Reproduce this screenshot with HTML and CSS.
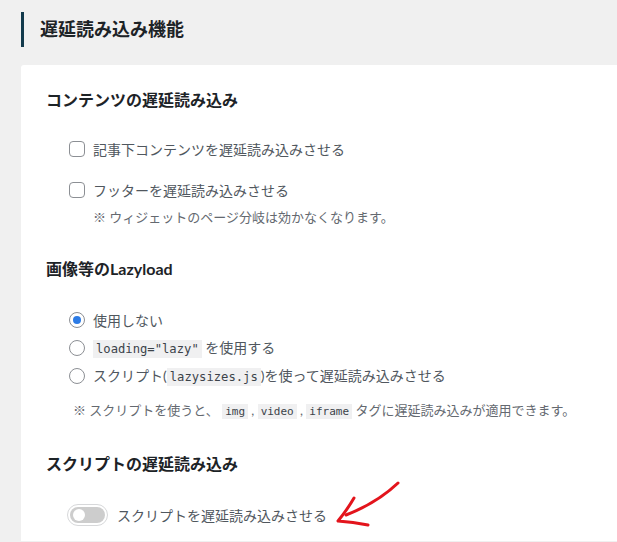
FILE: index.html
```html
<!DOCTYPE html>
<html lang="ja">
<head>
<meta charset="utf-8">
<title>遅延読み込み機能</title>
<link rel="stylesheet" href="styles.css">
</head>
<body>
<h1 class="page-title">遅延読み込み機能</h1>
<div class="card">
  <section class="sec">
    <h2 class="sec-title">コンテンツの遅延読み込み</h2>
    <div class="opts opts-check">
      <label class="row"><input type="checkbox" class="cb"><span>記事下コンテンツを遅延読み込みさせる</span></label>
      <label class="row"><input type="checkbox" class="cb"><span>フッターを遅延読み込みさせる</span></label>
      <p class="note note-in">※ ウィジェットのページ分岐は効かなくなります。</p>
    </div>
  </section>
  <section class="sec">
    <h2 class="sec-title">画像等のLazyload</h2>
    <div class="opts opts-radio">
      <label class="row"><input type="radio" name="lazy" class="rd" checked><span>使用しない</span></label>
      <label class="row"><input type="radio" name="lazy" class="rd"><span><code>loading="lazy"</code> を使用する</span></label>
      <label class="row"><input type="radio" name="lazy" class="rd"><span>スクリプト(<code>lazysizes.js</code>)を使って遅延読み込みさせる</span></label>
    </div>
    <p class="note note-out">※ スクリプトを使うと、 <code>img</code> , <code>video</code> , <code>iframe</code> タグに遅延読み込みが適用できます。</p>
  </section>
  <section class="sec">
    <h2 class="sec-title">スクリプトの遅延読み込み</h2>
    <div class="opts opts-toggle">
      <label class="row"><span class="toggle"><span class="track"><span class="knob"></span></span></span><span>スクリプトを遅延読み込みさせる</span></label>
    </div>
  </section>
</div>
<svg class="arrow" width="617" height="542" viewBox="0 0 617 542" aria-hidden="true">
  <path d="M398 483 Q377 503 346 515" />
  <path d="M354 498 Q347 510 338 521 Q353 522 368 525" />
</svg>
</body>
</html>
```
FILE: styles.css
```css
html, body {
  margin: 0;
  padding: 0;
}
body {
  background: #f0f0f0;
  font-family: Lato, "Noto Sans CJK JP", sans-serif;
  color: #1d2327;
  overflow: hidden;
  height: 542px;
  position: relative;
}
.page-title {
  margin: 12px 0 0 21px;
  height: 35px;
  line-height: 35px;
  border-left: 3px solid #123a4c;
  padding-left: 16px;
  font-size: 18px;
  font-weight: 700;
  color: #1d2327;
}
.card {
  margin: 18px 0 0 21px;
  background: #fff;
  border-top-left-radius: 3px;
  padding: 22px 0 12px 25px;
}
.sec-title {
  margin: 0;
  font-size: 16px;
  line-height: 26px;
  font-weight: 700;
  color: #1d2327;
}
.sec + .sec {
  margin-top: 29px;
}
.sec:nth-child(3) {
  margin-top: 30px;
}
.opts {
  padding-left: 23px;
  display: flex;
  flex-direction: column;
}
.opts-check {
  margin-top: 22px;
  gap: 13px;
}
.opts-check .note-in {
  margin-top: -10px;
  padding-left: 24px;
}
.opts-radio {
  margin-top: 24px;
}
.opts-toggle {
  margin-top: 24px;
  padding-left: 21px;
}
.row {
  display: flex;
  align-items: center;
  height: 28px;
  font-size: 14px;
  color: #50575e;
}
.cb, .rd {
  appearance: none;
  -webkit-appearance: none;
  margin: 0 8px 0 0;
  width: 16px;
  height: 16px;
  border: 1px solid #8c8f94;
  background: #fff;
  flex: none;
  position: relative;
}
.cb {
  border-radius: 4px;
}
.rd {
  border-radius: 50%;
}
.rd:checked::after {
  content: "";
  position: absolute;
  left: 3px;
  top: 3px;
  width: 8px;
  height: 8px;
  border-radius: 50%;
  background: #2c7be5;
}
code {
  font-family: "DejaVu Sans Mono", "Liberation Mono", monospace;
  font-size: 12.2px;
  background: #f0f0f1;
  color: #3c434a;
  padding: 2px 3px;
  line-height: 19px;
}
.note {
  margin: 0;
  font-size: 13px;
  line-height: 20px;
  color: #646970;
}
.note code {
  font-size: 11px;
  padding: 1px 3px;
}
.note-out {
  margin-top: 10px;
  padding-left: 27px;
}
.toggle {
  flex: none;
  box-sizing: border-box;
  width: 41px;
  height: 22px;
  border: 1px solid #d7d8da;
  border-radius: 11px;
  padding: 2px;
  margin-right: 9px;
  background: #fff;
}
.track {
  display: flex;
  align-items: center;
  height: 100%;
  border-radius: 9px;
  background: #cdcdcd;
  padding-left: 3px;
}
.knob {
  width: 12px;
  height: 12px;
  border-radius: 50%;
  background: #fff;
}
.arrow {
  position: absolute;
  left: 0;
  top: 0;
  pointer-events: none;
}
.arrow path {
  fill: none;
  stroke: #e3141c;
  stroke-width: 3;
  stroke-linecap: round;
  stroke-linejoin: round;
}
```
